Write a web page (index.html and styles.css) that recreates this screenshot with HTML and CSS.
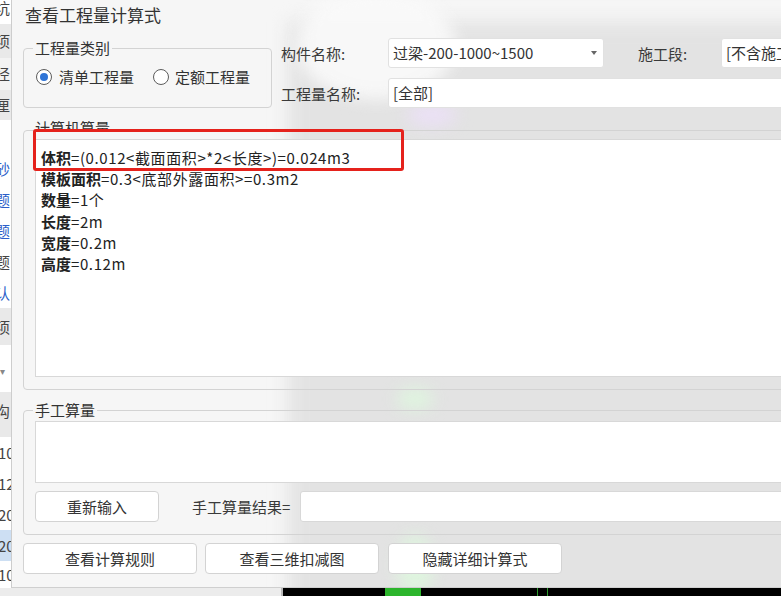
FILE: index.html
```html
<!DOCTYPE html>
<html lang="zh-CN">
<head>
<meta charset="utf-8">
<title>查看工程量计算式</title>
<link rel="stylesheet" href="styles.css">
</head>
<body>
<div class="screen">
  <div class="main">
    <div class="sliver">
      <div class="srow s-white h24 lh16"><span class="cut">坑</span></div>
      <div class="srow s-grey h34"><span class="cut">项</span></div>
      <div class="srow s-light h32"><span class="cut">径</span></div>
      <div class="srow s-grey h30"><span class="cut">厘</span></div>
      <div class="srow s-white h33"></div>
      <div class="srow s-white h31 blue"><span class="cut">砂</span></div>
      <div class="srow s-white h31 blue"><span class="cut">题</span></div>
      <div class="srow s-white h31 blue"><span class="cut">题</span></div>
      <div class="srow s-white h31"><span class="cut">题</span></div>
      <div class="srow s-white h31 blue"><span class="cut">认</span></div>
      <div class="srow s-grey h37"><span class="cut">项</span></div>
      <div class="srow s-white h47 arrowrow"><span class="cutsm">▾</span></div>
      <div class="srow s-grey h45 lh38"><span class="cut">沟</span></div>
      <div class="srow s-white h31"><span class="num">10</span></div>
      <div class="srow s-white h31"><span class="num">12</span></div>
      <div class="srow s-white h31"><span class="num">20</span></div>
      <div class="srow s-sel h31"><span class="num">20</span></div>
      <div class="srow s-white h27"><span class="num">10</span></div>
    </div>

    <div class="dialog">
      <div class="acrylic"></div>
      <div class="glow glow-top"></div>
      <div class="glow glow-purple"></div>
      <div class="glow glow-green1"></div>
      <div class="glow glow-green2"></div>

      <div class="content">
        <div class="title">查看工程量计算式</div>

        <div class="top">
          <div class="group group-type">
            <div class="legend">工程量类别</div>
            <div class="radios">
              <div class="radio"><span class="circle on"></span><span>清单工程量</span></div>
              <div class="radio"><span class="circle"></span><span>定额工程量</span></div>
            </div>
          </div>

          <div class="fields">
            <div class="frow">
              <span class="flabel w107">构件名称:</span>
              <div class="select">过梁-200-1000~1500<span class="arrow"></span></div>
              <span class="flabel w83 gap34">施工段:</span>
              <div class="input grow">[不含施工段]</div>
            </div>
            <div class="frow frow2">
              <span class="flabel w107">工程量名称:</span>
              <div class="input grow">[全部]</div>
            </div>
          </div>
        </div>

        <div class="group group-calc">
          <div class="legend legend-inset legend-clip"><span>计算机算量</span></div>
          <div class="textbox textbox-calc">
            <div class="line"><b>体积</b>=(0.012&lt;截面面积&gt;*2&lt;长度&gt;)=0.024m3</div>
            <div class="line"><b>模板面积</b>=0.3&lt;底部外露面积&gt;=0.3m2</div>
            <div class="line"><b>数量</b>=1个</div>
            <div class="line"><b>长度</b>=2m</div>
            <div class="line"><b>宽度</b>=0.2m</div>
            <div class="line"><b>高度</b>=0.12m</div>
          </div>
        </div>

        <div class="group group-manual">
          <div class="legend legend-inset">手工算量</div>
          <div class="textbox textbox-manual"></div>
          <div class="manual-row">
            <div class="btn btn-re">重新输入</div>
            <span class="result-label">手工算量结果=</span>
            <div class="input grow result-input"></div>
          </div>
        </div>

        <div class="actions">
          <div class="btn btn-act">查看计算规则</div>
          <div class="btn btn-act">查看三维扣减图</div>
          <div class="btn btn-act">隐藏详细计算式</div>
        </div>
      </div>

      <div class="red-mark"></div>
    </div>
  </div>

  <div class="strip">
    <div class="strip-left"></div>
    <div class="strip-dark">
      <span class="green-block"></span>
      <span class="green-line gl1"></span>
      <span class="green-line gl2"></span>
    </div>
  </div>
</div>
</body>
</html>
```

FILE: styles.css
```css
* { box-sizing: border-box; }

html, body {
  margin: 0;
  padding: 0;
}

body {
  width: 781px;
  height: 596px;
  overflow: hidden;
  background: #ececec;
  font-family: "Noto Sans CJK SC", "Noto Sans", sans-serif;
  color: #333;
  font-size: 15px;
}

.screen {
  width: 781px;
  height: 596px;
  overflow: hidden;
  display: flex;
  flex-direction: column;
}

.main {
  display: flex;
  height: 588px;
  flex: none;
}

/* ---------- background application sliver ---------- */
.sliver {
  width: 11px;
  flex: none;
  overflow: hidden;
  display: flex;
  flex-direction: column;
  font-size: 15px;
  color: #444;
}

.srow {
  width: 11px;
  overflow: hidden;
  white-space: nowrap;
}
.srow.blue { color: #2c5fc9; }
.s-white { background: #ffffff; }
.s-grey { background: #e9e9e9; }
.s-light { background: #f3f3f3; }
.s-sel { background: #cddff3; }

.h24 { height: 24px; line-height: 24px; }
.h27 { height: 27px; line-height: 27px; }
.h30 { height: 30px; line-height: 30px; }
.h31 { height: 31px; line-height: 31px; }
.h32 { height: 32px; line-height: 32px; }
.h33 { height: 33px; line-height: 33px; }
.h34 { height: 34px; line-height: 34px; }
.h37 { height: 37px; line-height: 37px; }
.h45 { height: 45px; }
.h47 { height: 47px; line-height: 47px; }
.lh16 { line-height: 16px; }
.lh38 { line-height: 38px; }

.cut { display: inline-block; margin-left: -5px; }
.num { display: inline-block; margin-left: -2px; }
.cutsm { display: inline-block; margin-left: 0; font-size: 10px; color: #888; }

/* ---------- dialog ---------- */
.dialog {
  position: relative;
  width: 900px;
  height: 588px;
  flex: none;
  background: #f6f6f6;
  border-left: 1px solid #cdcdcd;
  border-bottom: 1px solid #cfcfcf;
  overflow: hidden;
}

.acrylic {
  position: absolute;
  left: 276px;
  top: 22px;
  right: -40px;
  bottom: -40px;
  background: #e3e3e3;
  filter: blur(9px);
}

.glow {
  position: absolute;
  filter: blur(8px);
  border-radius: 50%;
}
.glow-top {
  left: 284px;
  top: -10px;
  width: 160px;
  height: 110px;
  background: rgba(250, 250, 250, 0.9);
}
.glow-purple {
  left: 395px;
  top: 104px;
  width: 50px;
  height: 22px;
  background: rgba(236, 224, 248, 0.9);
}
.glow-green1 {
  left: 385px;
  top: 388px;
  width: 36px;
  height: 22px;
  background: rgba(222, 245, 222, 0.95);
}
.glow-green2 {
  left: 385px;
  top: 535px;
  width: 36px;
  height: 60px;
  background: rgba(222, 245, 222, 0.95);
}

.content {
  position: relative;
  padding: 0 0 0 11px;
}

.title {
  height: 30px;
  line-height: 30px;
  font-size: 17px;
  color: #333;
  padding-left: 2px;
}

/* ---------- group boxes ---------- */
.group {
  border: 1px solid #d3d3d3;
  border-radius: 4px;
}

.legend {
  display: block;
  width: fit-content;
  margin: -11px 0 0 9px;
  padding: 0 2px;
  height: 20px;
  line-height: 20px;
  background: #f6f6f6;
  color: #333;
  font-size: 15px;
}

.legend-inset { margin-left: -2px; }

.legend-clip {
  margin-top: -13px;
  height: 11px;
  overflow: hidden;
}

/* ---------- top area ---------- */
.top {
  display: flex;
  margin-top: 8px;
}

.group-type {
  width: 249px;
  height: 60px;
  margin-top: 10px;
  flex: none;
}

.radios {
  display: flex;
  margin-top: 9px;
  padding-left: 12px;
  height: 20px;
  align-items: center;
}

.radio {
  display: flex;
  align-items: center;
  line-height: 20px;
}
.radio + .radio { margin-left: 19px; }

.circle {
  width: 16px;
  height: 16px;
  border-radius: 50%;
  border: 1px solid #5c5c5c;
  background: #fff;
  margin-right: 7px;
  display: flex;
  align-items: center;
  justify-content: center;
}
.radio + .radio .circle { margin-right: 6px; }
.circle.on::after {
  content: "";
  width: 8px;
  height: 8px;
  border-radius: 50%;
  background: #2f74d6;
}

.fields {
  flex: 1;
  margin-left: 9px;
}

.frow {
  display: flex;
  align-items: center;
  height: 30px;
}
.frow2 { margin-top: 10px; }

.flabel {
  flex: none;
  color: #3a3a3a;
}
.w107 { width: 107px; }
.w83 { width: 83px; }
.gap34 { margin-left: 34px; }

.select,
.input {
  height: 30px;
  line-height: 28px;
  background: #fff;
  border: 1px solid #e1e1e1;
  border-radius: 3px;
  padding: 0 4px;
  color: #333;
  white-space: nowrap;
  overflow: hidden;
}

.select {
  width: 216px;
  flex: none;
  display: flex;
  align-items: center;
  justify-content: space-between;
  padding-right: 6px;
}

.arrow {
  width: 0;
  height: 0;
  border-left: 3px solid transparent;
  border-right: 3px solid transparent;
  border-top: 4px solid #666;
}

.grow { flex: 1; }

/* ---------- computed quantity ---------- */
.group-calc {
  margin-top: 22px;
  padding: 0 0 12px 11px;
}

.textbox {
  background: #fff;
  border: 1px solid #d8d8d8;
}

.textbox-calc {
  margin-top: 10px;
  height: 238px;
  padding: 7px 5px;
}

.line {
  line-height: 21.2px;
  white-space: nowrap;
  color: #222;
  letter-spacing: 0.6px;
}
.line b { font-weight: 700; color: #222; letter-spacing: 0; }

/* ---------- manual quantity ---------- */
.group-manual {
  margin-top: 20px;
  padding: 0 0 12px 11px;
}

.textbox-manual {
  margin-top: 1px;
  height: 62px;
}

.manual-row {
  display: flex;
  align-items: center;
  margin-top: 8px;
  height: 31px;
}

.btn {
  height: 31px;
  line-height: 29px;
  background: #fff;
  border: 1px solid #d3d3d3;
  border-radius: 4px;
  text-align: center;
  color: #333;
  flex: none;
}

.btn-re { width: 124px; }

.result-label {
  margin-left: 33px;
  width: 108px;
  flex: none;
  color: #3a3a3a;
}

.result-input {
  height: 31px;
  border-color: #d8d8d8;
}

.actions {
  display: flex;
  margin-top: 8px;
}
.btn-act { width: 174px; }
.btn-act + .btn-act { margin-left: 8px; }
.btn-act:last-child { margin-left: 9px; }

/* ---------- red annotation ---------- */
.red-mark {
  position: absolute;
  left: 21px;
  top: 129px;
  width: 371px;
  height: 42px;
  border: 3px solid #e5221c;
  border-radius: 3px;
}

/* ---------- bottom strip ---------- */
.strip {
  display: flex;
  height: 8px;
  flex: none;
}
.strip-left {
  width: 283px;
  background: #ececec;
  border-right: 2px solid #b9b9b9;
}
.strip-dark {
  flex: 1;
  position: relative;
  background: #000;
}
.green-block {
  position: absolute;
  left: 102px;
  top: 0;
  width: 36px;
  height: 8px;
  background: #2cb52c;
}
.green-line {
  position: absolute;
  top: 0;
  width: 1px;
  height: 8px;
  background: #2a9a2a;
}
.gl1 { left: 254px; }
.gl2 { left: 264px; }
```
